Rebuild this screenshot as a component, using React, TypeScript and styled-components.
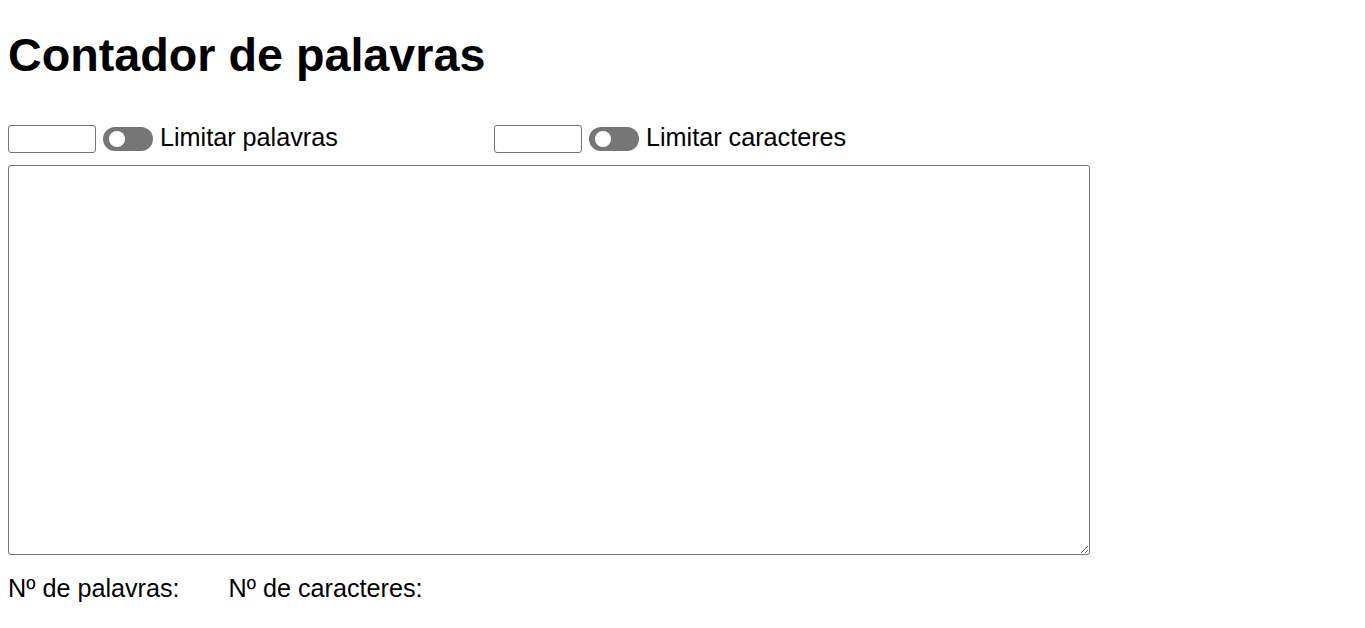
import React, { useState } from "react";
import styled, { createGlobalStyle } from "styled-components";

const Global = createGlobalStyle`
  body {
    margin: 8px;
    font-family: "Liberation Sans", Arial, sans-serif;
    background: #fff;
    color: #000;
  }
`;

const Title = styled.h1`
  font-size: 46.7px;
  font-weight: bold;
  margin: 21px 0 42px;
  line-height: 1.15;
`;

const Controls = styled.div`
  display: flex;
  align-items: center;
  height: 28px;
  margin-bottom: 12px;
`;

const Group = styled.div<{ $width?: number }>`
  display: flex;
  align-items: center;
  width: ${(p) => (p.$width ? `${p.$width}px` : "auto")};
`;

const LimitInput = styled.input`
  box-sizing: border-box;
  width: 88px;
  height: 28px;
  border: 1px solid #767676;
  border-radius: 3px;
  padding: 0 4px;
  margin: 0;
  font-family: inherit;
  font-size: 16px;
`;

const Toggle = styled.button<{ $on: boolean }>`
  position: relative;
  width: 50px;
  height: 24px;
  border: none;
  border-radius: 12px;
  background: ${(p) => (p.$on ? "#2196f3" : "#767676")};
  margin: 0 7px;
  padding: 0;
  cursor: pointer;
  flex-shrink: 0;

  &::after {
    content: "";
    position: absolute;
    top: 4px;
    left: ${(p) => (p.$on ? "30px" : "6px")};
    width: 16px;
    height: 16px;
    border-radius: 50%;
    background: #fff;
  }
`;

const Label = styled.span`
  font-size: 25.2px;
  white-space: nowrap;
  margin-bottom: 3px;
`;

const TextArea = styled.textarea`
  display: block;
  box-sizing: border-box;
  width: 1082px;
  height: 390px;
  border: 1px solid #767676;
  border-radius: 3px;
  margin: 0;
  padding: 4px;
  font-family: inherit;
  font-size: 16px;
`;

const Stats = styled.div`
  display: flex;
  gap: 49px;
  margin-top: 19px;
  font-size: 25.2px;
`;

export default function App() {
  const [text, setText] = useState("");
  const [wordsOn, setWordsOn] = useState(false);
  const [charsOn, setCharsOn] = useState(false);
  const [wordLimit, setWordLimit] = useState("");
  const [charLimit, setCharLimit] = useState("");

  return (
    <>
      <Global />
      <Title>Contador de palavras</Title>
      <Controls>
        <Group $width={486}>
          <LimitInput value={wordLimit} onChange={(e) => setWordLimit(e.target.value)} />
          <Toggle $on={wordsOn} onClick={() => setWordsOn(!wordsOn)} aria-label="Limitar palavras" />
          <Label>Limitar palavras</Label>
        </Group>
        <Group>
          <LimitInput value={charLimit} onChange={(e) => setCharLimit(e.target.value)} />
          <Toggle $on={charsOn} onClick={() => setCharsOn(!charsOn)} aria-label="Limitar caracteres" />
          <Label>Limitar caracteres</Label>
        </Group>
      </Controls>
      <TextArea value={text} onChange={(e) => setText(e.target.value)} />
      <Stats>
        <span>Nº de palavras:</span>
        <span>Nº de caracteres:</span>
      </Stats>
    </>
  );
}
